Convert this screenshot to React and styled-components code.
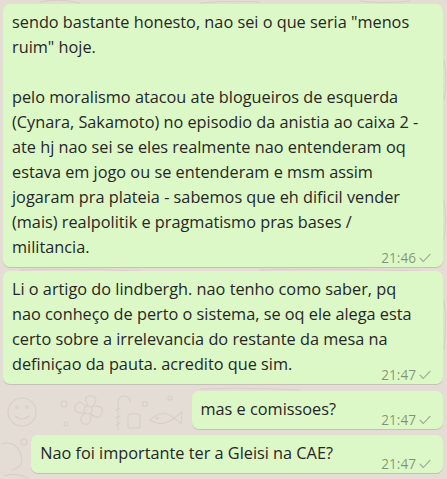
import React from "react";
import styled, { createGlobalStyle } from "styled-components";

// *********** GLOBAL ***********

const GlobalStyle = createGlobalStyle`
  html, body {
    margin: 0;
    padding: 0;
    background: #e4ddd5;
  }
  * {
    box-sizing: border-box;
  }
`;

// *********** COMPONENT STYLING STARTS HERE ***********

const Page = styled.div`
  position: relative;
  width: 100%;
  height: 479px;
  overflow: hidden;
  background: #e4ddd5;
  font-family: "Open Sans", "Noto Sans", sans-serif;
`;

const Doodles = styled.svg`
  position: absolute;
  top: 0;
  left: 0;
  width: 100%;
  height: 100%;
  z-index: 0;
`;

const Thread = styled.div`
  position: relative;
  z-index: 1;
  display: flex;
  flex-direction: column;
  align-items: flex-end;
  padding: 4px 4px 0 3px;
`;

const Bubble = styled.div`
  align-self: ${props => (props.$full ? "stretch" : "flex-end")};
  margin-top: ${props => props.$gap || 0}px;
  padding: 6px 9px 2px 9px;
  background: #dcf8c6;
  border-radius: 7px;
  box-shadow: 0 1px 0.5px rgba(0, 0, 0, 0.13);
`;

const Text = styled.div`
  font-size: 16.3px;
  line-height: 25px;
  color: #262626;
`;

const Line = styled.span`
  display: block;
  min-height: 25px;
  white-space: nowrap;
`;

const Spacer = styled.span`
  display: inline-block;
  width: ${props => props.$w || 100}px;
`;

const Meta = styled.div`
  display: flex;
  justify-content: flex-end;
  align-items: center;
  gap: 3px;
  margin-top: -10px;
  margin-right: 3px;
  height: 15px;
  font-size: 13.6px;
  line-height: 15px;
  color: rgba(0, 0, 0, 0.42);
`;

const Check = () => (
  <svg width="12" height="10" viewBox="0 0 12 10">
    <path
      d="M1 5.2 L4.3 8.5 L11 1.3"
      fill="none"
      stroke="#9aa693"
      strokeWidth="1.1"
      strokeLinecap="round"
      strokeLinejoin="round"
    />
  </svg>
);

const messages = [
  {
    time: "21:46",
    full: true,
    gap: 0,
    lines: [
      'sendo bastante honesto, nao sei o que seria "menos',
      'ruim" hoje.',
      "",
      "pelo moralismo atacou ate blogueiros de esquerda",
      "(Cynara, Sakamoto) no episodio da anistia ao caixa 2 -",
      "ate hj nao sei se eles realmente nao entenderam oq",
      "estava em jogo ou se entenderam e msm assim",
      "jogaram pra plateia - sabemos que eh dificil vender",
      "(mais) realpolitik e pragmatismo pras bases /",
      "militancia."
    ]
  },
  {
    time: "21:47",
    full: true,
    gap: 4,
    lines: [
      "Li o artigo do lindbergh. nao tenho como saber, pq",
      "nao conheço de perto o sistema, se oq ele alega esta",
      "certo sobre a irrelevancia do restante da mesa na",
      "definiçao da pauta. acredito que sim."
    ]
  },
  {
    time: "21:47",
    gap: 7,
    spacer: 98,
    lines: ["mas e comissoes?"]
  },
  {
    time: "21:47",
    gap: 6,
    spacer: 101,
    lines: ["Nao foi importante ter a Gleisi na CAE?"]
  }
];

const Wallpaper = () => (
  <Doodles viewBox="0 0 447 479" preserveAspectRatio="none">
    <g fill="none" stroke="#d8cfc6" strokeWidth="1.1" strokeLinecap="round">
      {/* face */}
      <circle cx="22" cy="412" r="14" />
      <path d="M15 416 Q22 422 29 416" />
      <circle cx="17" cy="407" r="1.3" />
      <circle cx="27" cy="407" r="1.3" />
      {/* flower */}
      <circle cx="88" cy="410" r="4" />
      <path d="M88 406 Q82 394 92 396 Q100 398 92 407 Q104 404 102 413 Q99 421 91 414 Q92 426 84 424 Q77 420 85 413 Q73 414 75 406 Q79 398 86 407" />
      <circle cx="64" cy="404" r="3" />
      <circle cx="66" cy="424" r="2" />
      {/* candy cane */}
      <path d="M118 430 L118 404 Q118 396 124 396 Q130 396 130 402" />
      <path d="M116 410 L120 408 M116 418 L120 416 M116 425 L120 423" />
      {/* block */}
      <rect x="128" y="414" width="12" height="14" rx="2" />
      {/* fish */}
      <path d="M150 420 Q162 408 174 418 Q162 428 150 420 Z" />
      <path d="M174 418 L182 412 L181 424 Z" />
      <circle cx="157" cy="418" r="1" />
      <circle cx="145" cy="404" r="2.5" />
      <circle cx="170" cy="398" r="2" />
      {/* bottom left */}
      <path d="M2 444 Q14 440 20 452 Q26 466 12 470" />
      <path d="M4 476 Q16 472 28 478" />
      <circle cx="24" cy="442" r="3" />
      {/* top strip */}
      <path d="M40 2 Q60 -2 80 3" />
      <path d="M200 3 Q230 0 260 2" />
      <path d="M360 1 Q380 4 410 1" />
      {/* right edge */}
      <path d="M444 60 Q448 80 444 100" />
      <path d="M444 200 Q447 220 444 240" />
      <path d="M444 300 Q447 320 444 350" />
      {/* between bubbles */}
      <path d="M20 270 Q80 268 140 271" />
      <path d="M260 270 Q320 268 420 271" />
      <path d="M200 389 Q240 387 300 390" />
    </g>
  </Doodles>
);

const App = () => {
  return (
    <Page>
      <GlobalStyle />
      <Wallpaper />
      <Thread>
        {messages.map((msg, i) => (
          <Bubble key={i} $full={msg.full} $gap={msg.gap}>
            <Text>
              {msg.lines.map((line, j) => (
                <Line key={j}>
                  {line}
                  {!msg.full && j === msg.lines.length - 1 && (
                    <Spacer $w={msg.spacer} />
                  )}
                </Line>
              ))}
            </Text>
            <Meta>
              <span>{msg.time}</span>
              <Check />
            </Meta>
          </Bubble>
        ))}
      </Thread>
    </Page>
  );
};

export default App;
